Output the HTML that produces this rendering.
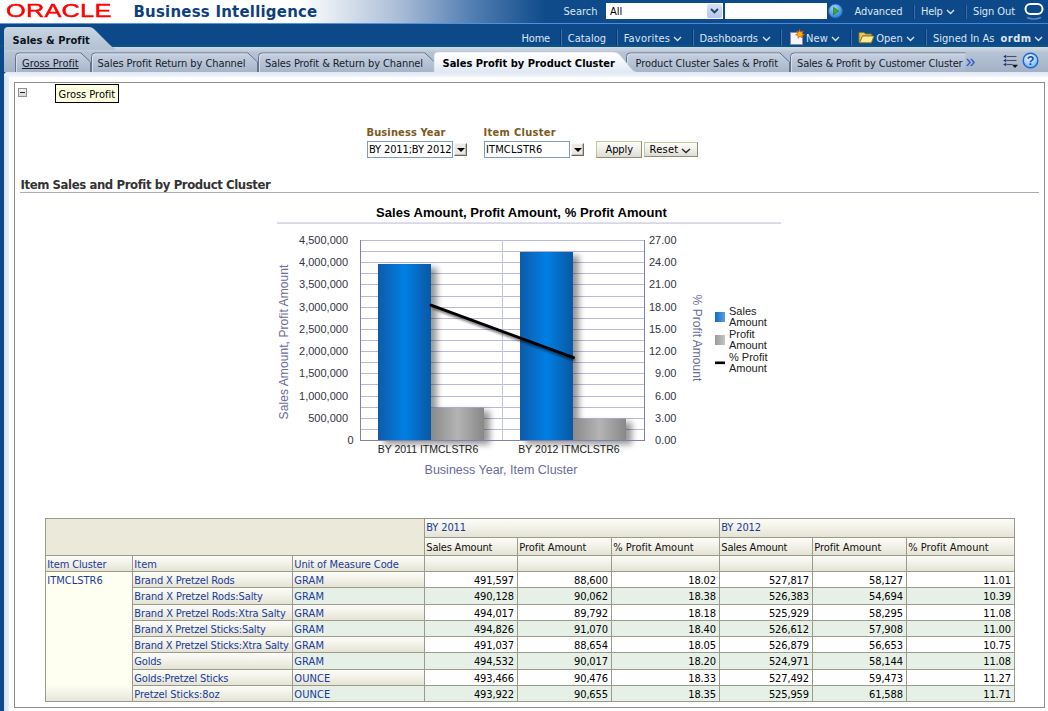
<!DOCTYPE html>
<html>
<head>
<meta charset="utf-8">
<title>Oracle Business Intelligence</title>
<style>
html,body{margin:0;padding:0;}
body{width:1048px;height:711px;overflow:hidden;position:relative;background:#0d4988;
 font-family:"DejaVu Sans Condensed","Liberation Sans",sans-serif;font-size:11px;color:#000;}
.abs{position:absolute;}
.t{position:absolute;white-space:nowrap;line-height:14px;}
/* top header */
#hdr{left:0;top:0;width:1048px;height:23px;background:linear-gradient(90deg,#ffffff 0px,#ffffff 300px,#a9bcd6 400px,#5580b3 470px,#0f4b8b 545px,#0d4988 1048px);}
#hline{left:0;top:23px;width:1048px;height:1px;background:linear-gradient(90deg,#5a9ae6,#3f86de);}
#bar2{left:0;top:24px;width:1048px;height:23px;background:linear-gradient(180deg,#0d4988 0px,#0d4988 20px,#0b5383 21.5px,#0b5383 23px);}
#oracle{left:5.5px;top:-0.6px;font-family:"Liberation Sans",sans-serif;font-size:19px;line-height:24px;color:#ff0000;transform-origin:0 0;transform:scaleX(1.33);letter-spacing:0.2px;-webkit-text-stroke:0.45px #ff0000;}
#bi{left:133.5px;top:0.4px;font-size:16.6px;line-height:23px;font-weight:bold;color:#0f3f7d;letter-spacing:0px;}
.nav{color:#dbe6f5;font-size:11px;}
.sep{position:absolute;width:1px;background:#083a70;box-shadow:1px 0 0 #3a6fae;}
/* tab strip */
#strip{left:4px;top:47px;width:1044px;height:25px;background:linear-gradient(180deg,#d0dae6 0px,#c3ceda 3.5px,#b7c4d5 5px,#aebcd0 14px,#a3b1c7 25px);}
#panel{left:4px;top:72px;width:1044px;height:639px;background:#fff;border-top-left-radius:4px;}
#panelTop{left:4px;top:72px;width:1044px;height:5px;background:linear-gradient(180deg,#dfe8f3,#f3f6fb);border-top-left-radius:4px;}
#panelLeft{left:4px;top:76px;width:5px;height:635px;background:linear-gradient(90deg,#d5e1f0,#e6edf6);}
#box{left:14px;top:82px;width:1029px;height:624px;border:1px solid #8e8e86;background:#fff;}
.tab{position:absolute;top:53px;height:19px;}
.tabtxt{position:absolute;white-space:nowrap;top:57px;line-height:14px;color:#1a1a2a;font-size:11px;}

.ddb{width:11px;height:11px;background:#ebe9e2;border:1px solid;border-color:#f8f8f4 #6a6860 #6a6860 #f8f8f4;box-shadow:inset -1px -1px 0 #c4c2b8;}
.ddb:after{content:"";position:absolute;left:1.5px;top:3.5px;border:4px solid transparent;border-top:4px solid #000;border-bottom:0;}
.btn{border:1px solid;border-color:#c5c7a0 #8e9070 #8e9070 #c5c7a0;background:linear-gradient(180deg,#fbfbf8,#ecece6 60%,#dcdcd2);}
</style>
</head>
<body>
<!-- header -->
<div class="abs" id="hdr"></div>
<div class="abs" id="hline"></div>
<div class="abs" id="bar2"></div>
<div class="t" id="oracle">ORACLE</div>
<div class="t" id="bi" style="letter-spacing:0.240px;">Business Intelligence</div>


<!-- search row -->
<div class="t nav" style="left:563.5px;top:4.7px;letter-spacing:0.003px;">Search</div>
<div class="abs" style="left:606px;top:2.5px;width:117px;height:16px;background:#fff;"></div>
<div class="t" style="left:610px;top:4.7px;color:#000;">All</div>
<div class="abs" style="left:707px;top:3.5px;width:15px;height:14px;background:linear-gradient(180deg,#d6e2f6,#b3c7ea);border-radius:2px;"></div>
<svg class="abs" style="left:707px;top:3.5px" width="15" height="14" viewBox="0 0 15 14"><path d="M4 5 L7.5 8.5 L11 5" fill="none" stroke="#2a3f66" stroke-width="1.8"/></svg>
<div class="abs" style="left:725px;top:2.5px;width:102px;height:16px;background:#fff;"></div>
<svg class="abs" style="left:828px;top:3px" width="15" height="16" viewBox="0 0 15 16">
 <defs><radialGradient id="gb" cx="40%" cy="30%" r="70%"><stop offset="0" stop-color="#a8d4ff"/><stop offset="1" stop-color="#2a7fd6"/></radialGradient></defs>
 <circle cx="7.5" cy="8" r="7" fill="url(#gb)" stroke="#1d62b0" stroke-width="0.8"/>
 <path d="M5.5 4.2 L10.6 8 L5.5 11.8 Z" fill="#35b025" stroke="#1c6e12" stroke-width="0.6"/>
</svg>
<div class="t nav" style="left:854.5px;top:4.7px;letter-spacing:-0.109px;">Advanced</div>
<div class="sep" style="left:913px;top:5px;height:14px;"></div>
<div class="t nav" style="left:921px;top:4.7px;letter-spacing:-0.270px;">Help</div>
<svg class="abs" style="left:946px;top:9px" width="9" height="6" viewBox="0 0 9 6"><path d="M1 1 L4.5 4.5 L8 1" fill="none" stroke="#dbe6f5" stroke-width="1.3"/></svg>
<div class="sep" style="left:965px;top:5px;height:14px;"></div>
<div class="t nav" style="left:973px;top:4.7px;letter-spacing:-0.086px;">Sign Out</div>
<svg class="abs" style="left:1023px;top:2px" width="22" height="20" viewBox="0 0 22 20">
 <rect x="2.5" y="2" width="17" height="10" rx="5" ry="5" fill="none" stroke="#ffffff" stroke-width="2"/>
 <path d="M4 15.5 Q11 18.5 18 15.5" fill="none" stroke="#5f86b8" stroke-width="1.6"/>
</svg>
<!-- nav row -->
<div class="t nav" style="left:521.5px;top:31.5px;letter-spacing:-0.184px;">Home</div>
<div class="sep" style="left:560px;top:29px;height:17px;"></div>
<div class="t nav" style="left:567.7px;top:31.5px;letter-spacing:0.069px;">Catalog</div>
<div class="sep" style="left:616px;top:29px;height:17px;"></div>
<div class="t nav" style="left:623.7px;top:31.5px;letter-spacing:0.210px;">Favorites</div>
<svg class="abs" style="left:673px;top:36px" width="9" height="6" viewBox="0 0 9 6"><path d="M1 1 L4.5 4.5 L8 1" fill="none" stroke="#dbe6f5" stroke-width="1.3"/></svg>
<div class="sep" style="left:692px;top:29px;height:17px;"></div>
<div class="t nav" style="left:699.5px;top:31.5px;letter-spacing:-0.034px;">Dashboards</div>
<svg class="abs" style="left:761.5px;top:36px" width="9" height="6" viewBox="0 0 9 6"><path d="M1 1 L4.5 4.5 L8 1" fill="none" stroke="#dbe6f5" stroke-width="1.3"/></svg>
<div class="sep" style="left:780px;top:29px;height:17px;"></div>
<svg class="abs" style="left:789px;top:29px" width="16" height="17" viewBox="0 0 16 17">
 <path d="M1.5 3.5 H10 L13.5 7 V15.5 H1.5 Z" fill="#f4f4fa" stroke="#8a8aa8" stroke-width="1"/>
 <path d="M10.5 0.5 L11.6 3 L14.3 2.2 L13 4.5 L15.5 5.8 L12.8 6.4 L13.2 9 L11 7.4 L9 9.2 L9.2 6.5 L6.6 5.8 L9 4.6 L7.8 2.2 L10 3 Z" fill="#ffb400" stroke="#d05a00" stroke-width="0.7"/>
</svg>
<div class="t nav" style="left:806px;top:31.5px;letter-spacing:0.135px;">New</div>
<svg class="abs" style="left:831px;top:36px" width="9" height="6" viewBox="0 0 9 6"><path d="M1 1 L4.5 4.5 L8 1" fill="none" stroke="#dbe6f5" stroke-width="1.3"/></svg>
<div class="sep" style="left:850px;top:29px;height:17px;"></div>
<svg class="abs" style="left:858px;top:30px" width="17" height="15" viewBox="0 0 17 15">
 <path d="M1 2.5 H6 L7.5 4 H13.5 V6 H4.5 L1.8 12.5 H1 Z" fill="#e8c860" stroke="#8c7420" stroke-width="0.9"/>
 <path d="M4.5 6 H16 L13.3 12.8 H1.6 Z" fill="#f8e89a" stroke="#8c7420" stroke-width="0.9"/>
</svg>
<div class="t nav" style="left:876.2px;top:31.5px;letter-spacing:0.016px;">Open</div>
<svg class="abs" style="left:906px;top:36px" width="9" height="6" viewBox="0 0 9 6"><path d="M1 1 L4.5 4.5 L8 1" fill="none" stroke="#dbe6f5" stroke-width="1.3"/></svg>
<div class="sep" style="left:925px;top:29px;height:17px;"></div>
<div class="t nav" style="left:933px;top:31.5px;letter-spacing:0.010px;">Signed In As</div>
<div class="t nav" style="left:1000.5px;top:31.5px;letter-spacing:0.477px;font-weight:bold;">ordm</div>
<svg class="abs" style="left:1034px;top:36px" width="9" height="6" viewBox="0 0 9 6"><path d="M1 1 L4.5 4.5 L8 1" fill="none" stroke="#dbe6f5" stroke-width="1.3"/></svg>

<!-- content panel -->
<div class="abs" id="strip"></div>
<svg class="abs" style="left:0;top:24px" width="130" height="26" viewBox="0 24 130 26">
 <defs><linearGradient id="sg" x1="0" y1="0" x2="0" y2="1"><stop offset="0" stop-color="#cad6e2"/><stop offset="0.5" stop-color="#bccad9"/><stop offset="1" stop-color="#b4c1d3"/></linearGradient></defs>
 <path d="M4 50 V31 Q4 27 8 27 H89 Q92 27 94 29 L110 45 Q112 47 114 47.5 L116 50 Z" fill="url(#sg)"/>
</svg>
<div class="t" style="left:12.5px;top:33.5px;letter-spacing:0.048px;font-weight:bold;color:#0b1220;">Sales &amp; Profit</div>

<svg class="abs" style="left:0;top:47px" width="1048" height="25" viewBox="0 47 1048 25">
<defs><linearGradient id="tg" x1="0" y1="0" x2="0" y2="1"><stop offset="0" stop-color="#c7d2e1"/><stop offset="1" stop-color="#a5b4ca"/></linearGradient><linearGradient id="tsel" x1="0" y1="0" x2="0" y2="1"><stop offset="0" stop-color="#ffffff"/><stop offset="0.45" stop-color="#f4f7fb"/><stop offset="1" stop-color="#dfe8f3"/></linearGradient><clipPath id="clip6"><rect x="780" y="47" width="185.5" height="25"/></clipPath></defs>
<path d="M15.5 72.5 V56.5 Q15.5 53 19 53 H81 L90.5 62 V72.5" fill="url(#tg)" stroke="#64748c" stroke-width="1"/>
<path d="M16.5 72.5 V57 Q16.5 54 19.5 54 H80.5" fill="none" stroke="#dbe3ee" stroke-opacity="0.85" stroke-width="1"/>
<path d="M91.5 72.5 V56.5 Q91.5 53 95 53 H248 L257.5 62 V72.5" fill="url(#tg)" stroke="#64748c" stroke-width="1"/>
<path d="M92.5 72.5 V57 Q92.5 54 95.5 54 H247.5" fill="none" stroke="#dbe3ee" stroke-opacity="0.85" stroke-width="1"/>
<path d="M258.5 72.5 V56.5 Q258.5 53 262 53 H425 L434.5 62 V72.5" fill="url(#tg)" stroke="#64748c" stroke-width="1"/>
<path d="M259.5 72.5 V57 Q259.5 54 262.5 54 H424.5" fill="none" stroke="#dbe3ee" stroke-opacity="0.85" stroke-width="1"/>
<path d="M626.5 72.5 V56.5 Q626.5 53 630 53 H780 L789.5 62 V72.5" fill="url(#tg)" stroke="#64748c" stroke-width="1"/>
<path d="M627.5 72.5 V57 Q627.5 54 630.5 54 H779.5" fill="none" stroke="#dbe3ee" stroke-opacity="0.85" stroke-width="1"/>
<path d="M790.5 72.5 V56.5 Q790.5 53 794 53 H966 L975.5 62 V72.5" fill="url(#tg)" stroke="#64748c" stroke-width="1" clip-path="url(#clip6)"/>
<path d="M791.5 72.5 V57 Q791.5 54 794.5 54 H965.5" fill="none" stroke="#dbe3ee" stroke-opacity="0.85" stroke-width="1" clip-path="url(#clip6)"/>
<path d="M434 72.5 V56 Q434 52 438.5 52 H613 Q617.5 52 620 55 L631 68.5 Q633.5 71.5 637 72.5 Z" fill="url(#tsel)" stroke="#c2cede" stroke-width="0.6"/>
</svg>
<div class="tabtxt" style="left:22px;letter-spacing:-0.023px;text-decoration:underline;">Gross Profit</div>
<div class="tabtxt" style="left:97.5px;letter-spacing:-0.074px;">Sales Profit Return by Channel</div>
<div class="tabtxt" style="left:265px;letter-spacing:-0.097px;">Sales Profit &amp; Return by Channel</div>
<div class="tabtxt" style="left:635.5px;letter-spacing:-0.085px;">Product Cluster Sales &amp; Profit</div>
<div class="tabtxt" style="left:797px;letter-spacing:-0.159px;">Sales &amp; Profit by Customer Cluster</div>
<div class="tabtxt" style="left:442.5px;letter-spacing:0.010px;font-weight:bold;color:#000;">Sales Profit by Product Cluster</div>
<div class="t" style="left:965.5px;top:51.3px;font-size:17.5px;line-height:20px;color:#2b5ac4;font-family:'Liberation Sans',sans-serif;">»</div>
<svg class="abs" style="left:1002px;top:54px" width="17" height="15" viewBox="0 0 17 15">
 <g stroke="#4a4f5e" stroke-width="1.1"><path d="M4.5 2.5 H14.5"/><path d="M4.5 6.5 H14.5"/><path d="M4.5 10.5 H10.5"/></g>
 <g fill="#2c2c7a"><path d="M1.2 2.5 L4.2 0.8 V4.2 Z"/><path d="M1.2 6.5 L4.2 4.8 V8.2 Z"/><path d="M1.2 10.5 L4.2 8.8 V12.2 Z"/></g>
 <path d="M10 10.8 H16 L13 14 Z" fill="#111"/>
</svg>
<svg class="abs" style="left:1022px;top:52px" width="17" height="17" viewBox="0 0 17 17">
 <defs><radialGradient id="hb" cx="45%" cy="30%" r="75%"><stop offset="0" stop-color="#e6f3ff"/><stop offset="0.55" stop-color="#a9d0fa"/><stop offset="1" stop-color="#6ea9ee"/></radialGradient></defs>
 <circle cx="8.5" cy="8.5" r="7.3" fill="url(#hb)" stroke="#1e66c8" stroke-width="1.4"/>
 <text x="8.5" y="12.9" text-anchor="middle" font-family="Liberation Sans, sans-serif" font-weight="bold" font-size="12.5" fill="#0d4db8">?</text>
</svg>
<div class="abs" id="panel"></div>
<div class="abs" id="panelTop"></div>
<div class="abs" id="panelLeft"></div>
<div class="abs" id="box"></div>

<!-- collapse icon + tooltip -->
<div class="abs" style="left:18px;top:88px;width:7px;height:7px;border:1px solid #8f8f8f;background:linear-gradient(180deg,#f4f4f4,#d8d8d8);"></div>
<div class="abs" style="left:20px;top:92px;width:5px;height:1px;background:#222;"></div>
<div class="abs" style="left:55px;top:84px;width:62px;height:17px;border:1px solid #000;background:#ffffe1;"></div>
<div class="t" style="left:58.5px;top:87.8px;letter-spacing:-0.023px;color:#000;">Gross Profit</div>

<!-- prompts -->
<div class="t" style="left:366.5px;top:125.8px;letter-spacing:0.131px;font-weight:bold;color:#7b5a1f;">Business Year</div>
<div class="t" style="left:483.5px;top:125.8px;letter-spacing:0.307px;font-weight:bold;color:#7b5a1f;">Item Cluster</div>
<div class="abs" style="left:367px;top:141px;width:84px;height:15px;border:1px solid #7f9db9;background:#fff;"></div>
<div class="t" style="left:369px;top:143.2px;letter-spacing:-0.130px;color:#000;">BY 2011;BY 2012</div>
<div class="abs ddb" style="left:454px;top:143px;"></div>
<div class="abs" style="left:484px;top:141px;width:84px;height:15px;border:1px solid #7f9db9;background:#fff;"></div>
<div class="t" style="left:486px;top:143.2px;letter-spacing:0.120px;color:#000;">ITMCLSTR6</div>
<div class="abs ddb" style="left:571px;top:143px;"></div>
<div class="abs btn" style="left:596px;top:141px;width:44px;height:15px;"></div>
<div class="t" style="left:605.5px;top:143.2px;letter-spacing:-0.091px;color:#000;">Apply</div>
<div class="abs btn" style="left:644px;top:142px;width:52px;height:13px;"></div>
<div class="t" style="left:649.5px;top:143.2px;letter-spacing:0.278px;color:#000;">Reset</div>
<svg class="abs" style="left:680.5px;top:147.5px" width="10" height="6" viewBox="0 0 10 6"><path d="M1 1 L5 4.6 L9 1" fill="none" stroke="#222" stroke-width="1.3"/></svg>

<!-- section title -->
<div class="t" style="left:20.5px;top:175.5px;letter-spacing:-0.405px;font-size:13px;line-height:17px;font-weight:bold;color:#333333;">Item Sales and Profit by Product Cluster</div>
<div class="abs" style="left:20px;top:192px;width:1019px;height:1px;background:#a9adb8;"></div>
<!-- chart -->
<svg class="abs" style="left:270px;top:198px" width="520" height="295" viewBox="270 198 520 295" font-family="Liberation Sans, sans-serif">
<defs>
<linearGradient id="gBlue" x1="0" y1="0" x2="1" y2="0"><stop offset="0" stop-color="#0e5ba8"/><stop offset="0.5" stop-color="#007fe4"/><stop offset="1" stop-color="#0a58a4"/></linearGradient>
<linearGradient id="gGray" x1="0" y1="0" x2="1" y2="0"><stop offset="0" stop-color="#8a8a8a"/><stop offset="0.5" stop-color="#b4b4b4"/><stop offset="1" stop-color="#888888"/></linearGradient>
<linearGradient id="lBlue" x1="0" y1="0" x2="1" y2="0"><stop offset="0" stop-color="#0a6dcc"/><stop offset="1" stop-color="#5f9fe0"/></linearGradient>
<linearGradient id="lGray" x1="0" y1="0" x2="1" y2="0"><stop offset="0" stop-color="#9b9b9b"/><stop offset="1" stop-color="#c4c4c4"/></linearGradient>
<filter id="sh" x="-20%" y="-10%" width="150%" height="130%"><feGaussianBlur stdDeviation="3.3"/></filter>
<filter id="shl" x="-10%" y="-30%" width="120%" height="160%"><feGaussianBlur stdDeviation="1.2"/></filter>
</defs>
<text x="521.5" y="217" text-anchor="middle" font-size="13" font-weight="bold" fill="#000000" letter-spacing="0.06">Sales Amount, Profit Amount, % Profit Amount</text>
<rect x="277" y="222.3" width="504" height="1.6" fill="#d3d3e6"/>
<line x1="360.5" y1="240.5" x2="644.5" y2="240.5" stroke="#b8b8d8" stroke-width="1"/>
<line x1="360.5" y1="251.5" x2="644.5" y2="251.5" stroke="#b8b8d8" stroke-width="1"/>
<line x1="360.5" y1="262.5" x2="644.5" y2="262.5" stroke="#b8b8d8" stroke-width="1"/>
<line x1="360.5" y1="273.5" x2="644.5" y2="273.5" stroke="#b8b8d8" stroke-width="1"/>
<line x1="360.5" y1="284.5" x2="644.5" y2="284.5" stroke="#b8b8d8" stroke-width="1"/>
<line x1="360.5" y1="296.5" x2="644.5" y2="296.5" stroke="#b8b8d8" stroke-width="1"/>
<line x1="360.5" y1="307.5" x2="644.5" y2="307.5" stroke="#b8b8d8" stroke-width="1"/>
<line x1="360.5" y1="318.5" x2="644.5" y2="318.5" stroke="#b8b8d8" stroke-width="1"/>
<line x1="360.5" y1="329.5" x2="644.5" y2="329.5" stroke="#b8b8d8" stroke-width="1"/>
<line x1="360.5" y1="340.5" x2="644.5" y2="340.5" stroke="#b8b8d8" stroke-width="1"/>
<line x1="360.5" y1="351.5" x2="644.5" y2="351.5" stroke="#b8b8d8" stroke-width="1"/>
<line x1="360.5" y1="362.5" x2="644.5" y2="362.5" stroke="#b8b8d8" stroke-width="1"/>
<line x1="360.5" y1="373.5" x2="644.5" y2="373.5" stroke="#b8b8d8" stroke-width="1"/>
<line x1="360.5" y1="384.5" x2="644.5" y2="384.5" stroke="#b8b8d8" stroke-width="1"/>
<line x1="360.5" y1="396.5" x2="644.5" y2="396.5" stroke="#b8b8d8" stroke-width="1"/>
<line x1="360.5" y1="407.5" x2="644.5" y2="407.5" stroke="#b8b8d8" stroke-width="1"/>
<line x1="360.5" y1="418.5" x2="644.5" y2="418.5" stroke="#b8b8d8" stroke-width="1"/>
<line x1="360.5" y1="429.5" x2="644.5" y2="429.5" stroke="#b8b8d8" stroke-width="1"/>
<line x1="360.5" y1="440.5" x2="644.5" y2="440.5" stroke="#b8b8d8" stroke-width="1"/>
<line x1="502.5" y1="240.5" x2="502.5" y2="440.5" stroke="#c4c4de" stroke-width="1"/>
<g filter="url(#sh)" opacity="0.4"><rect x="384" y="267.5" width="53" height="177.00" fill="#000"/><rect x="437" y="411.1" width="53" height="33.40" fill="#000"/><rect x="526" y="255.5" width="53" height="189.00" fill="#000"/><rect x="579" y="422.2" width="53" height="22.30" fill="#000"/></g>
<line x1="360.5" y1="240" x2="360.5" y2="441" stroke="#8080b0" stroke-width="1"/>
<line x1="644.5" y1="240" x2="644.5" y2="441" stroke="#8080b0" stroke-width="1"/>
<line x1="360.0" y1="440.5" x2="645.0" y2="440.5" stroke="#8080b0" stroke-width="1"/>
<rect x="378" y="264" width="53" height="176.00" fill="url(#gBlue)"/>
<rect x="431" y="407.6" width="53" height="32.40" fill="url(#gGray)"/>
<rect x="520" y="252" width="53" height="188.00" fill="url(#gBlue)"/>
<rect x="573" y="418.7" width="53" height="21.30" fill="url(#gGray)"/>
<line x1="432.5" y1="307.7" x2="575.0" y2="360.1" stroke="#000" stroke-opacity="0.5" stroke-width="3" filter="url(#shl)"/>
<line x1="431.0" y1="305.2" x2="573.5" y2="357.6" stroke="#000" stroke-width="3" stroke-linecap="round"/>
<text x="353.5" y="444.30" text-anchor="end" font-size="11" fill="#333344">0</text>
<text x="348" y="422.30" text-anchor="end" font-size="11" fill="#333344">500,000</text>
<text x="348" y="400.30" text-anchor="end" font-size="11" fill="#333344">1,000,000</text>
<text x="348" y="377.30" text-anchor="end" font-size="11" fill="#333344">1,500,000</text>
<text x="348" y="355.30" text-anchor="end" font-size="11" fill="#333344">2,000,000</text>
<text x="348" y="333.30" text-anchor="end" font-size="11" fill="#333344">2,500,000</text>
<text x="348" y="311.30" text-anchor="end" font-size="11" fill="#333344">3,000,000</text>
<text x="348" y="288.30" text-anchor="end" font-size="11" fill="#333344">3,500,000</text>
<text x="348" y="266.30" text-anchor="end" font-size="11" fill="#333344">4,000,000</text>
<text x="348" y="244.30" text-anchor="end" font-size="11" fill="#333344">4,500,000</text>
<text x="676.5" y="444.30" text-anchor="end" font-size="11" fill="#333344">0.00</text>
<text x="676.5" y="422.30" text-anchor="end" font-size="11" fill="#333344">3.00</text>
<text x="676.5" y="400.30" text-anchor="end" font-size="11" fill="#333344">6.00</text>
<text x="676.5" y="377.30" text-anchor="end" font-size="11" fill="#333344">9.00</text>
<text x="676.5" y="355.30" text-anchor="end" font-size="11" fill="#333344">12.00</text>
<text x="676.5" y="333.30" text-anchor="end" font-size="11" fill="#333344">15.00</text>
<text x="676.5" y="311.30" text-anchor="end" font-size="11" fill="#333344">18.00</text>
<text x="676.5" y="288.30" text-anchor="end" font-size="11" fill="#333344">21.00</text>
<text x="676.5" y="266.30" text-anchor="end" font-size="11" fill="#333344">24.00</text>
<text x="676.5" y="244.30" text-anchor="end" font-size="11" fill="#333344">27.00</text>
<text transform="translate(288,342) rotate(-90)" text-anchor="middle" font-size="12" fill="#6a6a9c" letter-spacing="0.08">Sales Amount, Profit Amount</text>
<text transform="translate(692.5,338) rotate(90)" text-anchor="middle" font-size="12" fill="#6a6a9c" letter-spacing="0.06">% Profit Amount</text>
<text x="501" y="474" text-anchor="middle" font-size="12.5" fill="#6a6a9c">Business Year, Item Cluster</text>
<text x="428" y="453" text-anchor="middle" font-size="10.5" fill="#222222">BY 2011 ITMCLSTR6</text>
<text x="569" y="453" text-anchor="middle" font-size="10.5" fill="#222222">BY 2012 ITMCLSTR6</text>
<rect x="715" y="312" width="10" height="10" fill="url(#lBlue)"/>
<rect x="715" y="335" width="10" height="10" fill="url(#lGray)"/>
<rect x="715" y="361.5" width="10" height="2.6" fill="#000"/>
<text x="729" y="314.6" font-size="11" fill="#222222">Sales</text>
<text x="729" y="325.6" font-size="11" fill="#222222">Amount</text>
<text x="729" y="337.7" font-size="11" fill="#222222">Profit</text>
<text x="729" y="348.5" font-size="11" fill="#222222">Amount</text>
<text x="729" y="360.6" font-size="11" fill="#222222">% Profit</text>
<text x="729" y="371.5" font-size="11" fill="#222222">Amount</text>
</svg>
<!-- table -->
<div class="abs" style="left:45px;top:518px;width:970px;height:184px;background:#9b9b8d;"></div>
<div class="abs" style="left:46px;top:519px;width:378px;height:36px;background:#ebe9d9;"></div>
<div class="abs" style="left:425px;top:519px;width:294px;height:18px;background:linear-gradient(180deg,#fcfcf8 0%,#f3f2ea 45%,#e5e3d4 100%);"></div>
<div class="t" style="left:426.3px;top:520.5px;letter-spacing:-0.137px;color:#183a9a;">BY 2011</div>
<div class="abs" style="left:720px;top:519px;width:294px;height:18px;background:linear-gradient(180deg,#fcfcf8 0%,#f3f2ea 45%,#e5e3d4 100%);"></div>
<div class="t" style="left:721.3px;top:520.5px;letter-spacing:-0.137px;color:#183a9a;">BY 2012</div>
<div class="abs" style="left:425px;top:538px;width:92px;height:17px;background:linear-gradient(180deg,#fcfcf8 0%,#f3f2ea 45%,#e5e3d4 100%);"></div>
<div class="t" style="left:426.3px;top:540.5px;letter-spacing:-0.198px;color:#111111;">Sales Amount</div>
<div class="abs" style="left:425px;top:556px;width:92px;height:15px;background:linear-gradient(180deg,#fcfcf8 0%,#f3f2ea 45%,#e5e3d4 100%);"></div>
<div class="abs" style="left:518px;top:538px;width:93px;height:17px;background:linear-gradient(180deg,#fcfcf8 0%,#f3f2ea 45%,#e5e3d4 100%);"></div>
<div class="t" style="left:519.3px;top:540.5px;letter-spacing:-0.061px;color:#111111;">Profit Amount</div>
<div class="abs" style="left:518px;top:556px;width:93px;height:15px;background:linear-gradient(180deg,#fcfcf8 0%,#f3f2ea 45%,#e5e3d4 100%);"></div>
<div class="abs" style="left:612px;top:538px;width:107px;height:17px;background:linear-gradient(180deg,#fcfcf8 0%,#f3f2ea 45%,#e5e3d4 100%);"></div>
<div class="t" style="left:613.3px;top:540.5px;letter-spacing:-0.006px;color:#111111;">% Profit Amount</div>
<div class="abs" style="left:612px;top:556px;width:107px;height:15px;background:linear-gradient(180deg,#fcfcf8 0%,#f3f2ea 45%,#e5e3d4 100%);"></div>
<div class="abs" style="left:720px;top:538px;width:92px;height:17px;background:linear-gradient(180deg,#fcfcf8 0%,#f3f2ea 45%,#e5e3d4 100%);"></div>
<div class="t" style="left:721.3px;top:540.5px;letter-spacing:-0.198px;color:#111111;">Sales Amount</div>
<div class="abs" style="left:720px;top:556px;width:92px;height:15px;background:linear-gradient(180deg,#fcfcf8 0%,#f3f2ea 45%,#e5e3d4 100%);"></div>
<div class="abs" style="left:813px;top:538px;width:93px;height:17px;background:linear-gradient(180deg,#fcfcf8 0%,#f3f2ea 45%,#e5e3d4 100%);"></div>
<div class="t" style="left:814.3px;top:540.5px;letter-spacing:-0.061px;color:#111111;">Profit Amount</div>
<div class="abs" style="left:813px;top:556px;width:93px;height:15px;background:linear-gradient(180deg,#fcfcf8 0%,#f3f2ea 45%,#e5e3d4 100%);"></div>
<div class="abs" style="left:907px;top:538px;width:107px;height:17px;background:linear-gradient(180deg,#fcfcf8 0%,#f3f2ea 45%,#e5e3d4 100%);"></div>
<div class="t" style="left:908.3px;top:540.5px;letter-spacing:-0.006px;color:#111111;">% Profit Amount</div>
<div class="abs" style="left:907px;top:556px;width:107px;height:15px;background:linear-gradient(180deg,#fcfcf8 0%,#f3f2ea 45%,#e5e3d4 100%);"></div>
<div class="abs" style="left:46px;top:556px;width:86px;height:15px;background:linear-gradient(180deg,#fcfcf8 0%,#f3f2ea 45%,#e5e3d4 100%);"></div>
<div class="t" style="left:47.3px;top:557.5px;letter-spacing:-0.150px;color:#183a9a;">Item Cluster</div>
<div class="abs" style="left:133px;top:556px;width:159px;height:15px;background:linear-gradient(180deg,#fcfcf8 0%,#f3f2ea 45%,#e5e3d4 100%);"></div>
<div class="t" style="left:134.3px;top:557.5px;letter-spacing:0.055px;color:#183a9a;">Item</div>
<div class="abs" style="left:293px;top:556px;width:131px;height:15px;background:linear-gradient(180deg,#fcfcf8 0%,#f3f2ea 45%,#e5e3d4 100%);"></div>
<div class="t" style="left:294.3px;top:557.5px;letter-spacing:-0.100px;color:#183a9a;">Unit of Measure Code</div>
<div class="abs" style="left:46px;top:572px;width:86px;height:129px;background:linear-gradient(180deg,#fffff1 0px,#fffff1 112px,#f5f4e9 120px,#e8e6d8 129px);"></div>
<div class="t" style="left:47.3px;top:573.5px;letter-spacing:0.009px;color:#183a9a;">ITMCLSTR6</div>
<div class="abs" style="left:133px;top:572px;width:159px;height:15px;background:linear-gradient(180deg,#fcfcf8 0%,#f3f2ea 45%,#e5e3d4 100%);"></div>
<div class="t" style="left:134.3px;top:573.5px;letter-spacing:-0.146px;color:#183a9a;">Brand X Pretzel Rods</div>
<div class="abs" style="left:293px;top:572px;width:131px;height:15px;background:linear-gradient(180deg,#fcfcf8 0%,#f3f2ea 45%,#e5e3d4 100%);"></div>
<div class="t" style="left:294.3px;top:573.5px;letter-spacing:0.082px;color:#183a9a;">GRAM</div>
<div class="abs" style="left:425px;top:572px;width:92px;height:15px;background:#ffffff;"></div>
<div class="t" style="left:433.79999999999995px;width:80px;text-align:right;top:573.5px;letter-spacing:-0.158px;color:#000000;">491,597</div>
<div class="abs" style="left:518px;top:572px;width:93px;height:15px;background:#ffffff;"></div>
<div class="t" style="left:527.8px;width:80px;text-align:right;top:573.5px;letter-spacing:-0.156px;color:#000000;">88,600</div>
<div class="abs" style="left:612px;top:572px;width:107px;height:15px;background:#ffffff;"></div>
<div class="t" style="left:635.8px;width:80px;text-align:right;top:573.5px;letter-spacing:-0.153px;color:#000000;">18.02</div>
<div class="abs" style="left:720px;top:572px;width:92px;height:15px;background:#ffffff;"></div>
<div class="t" style="left:728.8px;width:80px;text-align:right;top:573.5px;letter-spacing:-0.158px;color:#000000;">527,817</div>
<div class="abs" style="left:813px;top:572px;width:93px;height:15px;background:#ffffff;"></div>
<div class="t" style="left:822.8px;width:80px;text-align:right;top:573.5px;letter-spacing:-0.156px;color:#000000;">58,127</div>
<div class="abs" style="left:907px;top:572px;width:107px;height:15px;background:#ffffff;"></div>
<div class="t" style="left:930.8px;width:80px;text-align:right;top:573.5px;letter-spacing:-0.153px;color:#000000;">11.01</div>
<div class="abs" style="left:133px;top:588px;width:159px;height:16px;background:linear-gradient(180deg,#fcfcf8 0%,#f3f2ea 45%,#e5e3d4 100%);"></div>
<div class="t" style="left:134.3px;top:589.5px;letter-spacing:-0.109px;color:#183a9a;">Brand X Pretzel Rods:Salty</div>
<div class="abs" style="left:293px;top:588px;width:131px;height:16px;background:#e6f0e6;"></div>
<div class="t" style="left:294.3px;top:589.5px;letter-spacing:0.082px;color:#183a9a;">GRAM</div>
<div class="abs" style="left:425px;top:588px;width:92px;height:16px;background:#e6f0e6;"></div>
<div class="t" style="left:433.79999999999995px;width:80px;text-align:right;top:589.5px;letter-spacing:-0.158px;color:#000000;">490,128</div>
<div class="abs" style="left:518px;top:588px;width:93px;height:16px;background:#e6f0e6;"></div>
<div class="t" style="left:527.8px;width:80px;text-align:right;top:589.5px;letter-spacing:-0.156px;color:#000000;">90,062</div>
<div class="abs" style="left:612px;top:588px;width:107px;height:16px;background:#e6f0e6;"></div>
<div class="t" style="left:635.8px;width:80px;text-align:right;top:589.5px;letter-spacing:-0.153px;color:#000000;">18.38</div>
<div class="abs" style="left:720px;top:588px;width:92px;height:16px;background:#e6f0e6;"></div>
<div class="t" style="left:728.8px;width:80px;text-align:right;top:589.5px;letter-spacing:-0.158px;color:#000000;">526,383</div>
<div class="abs" style="left:813px;top:588px;width:93px;height:16px;background:#e6f0e6;"></div>
<div class="t" style="left:822.8px;width:80px;text-align:right;top:589.5px;letter-spacing:-0.156px;color:#000000;">54,694</div>
<div class="abs" style="left:907px;top:588px;width:107px;height:16px;background:#e6f0e6;"></div>
<div class="t" style="left:930.8px;width:80px;text-align:right;top:589.5px;letter-spacing:-0.153px;color:#000000;">10.39</div>
<div class="abs" style="left:133px;top:605px;width:159px;height:15px;background:linear-gradient(180deg,#fcfcf8 0%,#f3f2ea 45%,#e5e3d4 100%);"></div>
<div class="t" style="left:134.3px;top:606.5px;letter-spacing:-0.121px;color:#183a9a;">Brand X Pretzel Rods:Xtra Salty</div>
<div class="abs" style="left:293px;top:605px;width:131px;height:15px;background:linear-gradient(180deg,#fcfcf8 0%,#f3f2ea 45%,#e5e3d4 100%);"></div>
<div class="t" style="left:294.3px;top:606.5px;letter-spacing:0.082px;color:#183a9a;">GRAM</div>
<div class="abs" style="left:425px;top:605px;width:92px;height:15px;background:#ffffff;"></div>
<div class="t" style="left:433.79999999999995px;width:80px;text-align:right;top:606.5px;letter-spacing:-0.158px;color:#000000;">494,017</div>
<div class="abs" style="left:518px;top:605px;width:93px;height:15px;background:#ffffff;"></div>
<div class="t" style="left:527.8px;width:80px;text-align:right;top:606.5px;letter-spacing:-0.156px;color:#000000;">89,792</div>
<div class="abs" style="left:612px;top:605px;width:107px;height:15px;background:#ffffff;"></div>
<div class="t" style="left:635.8px;width:80px;text-align:right;top:606.5px;letter-spacing:-0.153px;color:#000000;">18.18</div>
<div class="abs" style="left:720px;top:605px;width:92px;height:15px;background:#ffffff;"></div>
<div class="t" style="left:728.8px;width:80px;text-align:right;top:606.5px;letter-spacing:-0.158px;color:#000000;">525,929</div>
<div class="abs" style="left:813px;top:605px;width:93px;height:15px;background:#ffffff;"></div>
<div class="t" style="left:822.8px;width:80px;text-align:right;top:606.5px;letter-spacing:-0.156px;color:#000000;">58,295</div>
<div class="abs" style="left:907px;top:605px;width:107px;height:15px;background:#ffffff;"></div>
<div class="t" style="left:930.8px;width:80px;text-align:right;top:606.5px;letter-spacing:-0.153px;color:#000000;">11.08</div>
<div class="abs" style="left:133px;top:621px;width:159px;height:15px;background:linear-gradient(180deg,#fcfcf8 0%,#f3f2ea 45%,#e5e3d4 100%);"></div>
<div class="t" style="left:134.3px;top:622.5px;letter-spacing:-0.186px;color:#183a9a;">Brand X Pretzel Sticks:Salty</div>
<div class="abs" style="left:293px;top:621px;width:131px;height:15px;background:#e6f0e6;"></div>
<div class="t" style="left:294.3px;top:622.5px;letter-spacing:0.082px;color:#183a9a;">GRAM</div>
<div class="abs" style="left:425px;top:621px;width:92px;height:15px;background:#e6f0e6;"></div>
<div class="t" style="left:433.79999999999995px;width:80px;text-align:right;top:622.5px;letter-spacing:-0.158px;color:#000000;">494,826</div>
<div class="abs" style="left:518px;top:621px;width:93px;height:15px;background:#e6f0e6;"></div>
<div class="t" style="left:527.8px;width:80px;text-align:right;top:622.5px;letter-spacing:-0.156px;color:#000000;">91,070</div>
<div class="abs" style="left:612px;top:621px;width:107px;height:15px;background:#e6f0e6;"></div>
<div class="t" style="left:635.8px;width:80px;text-align:right;top:622.5px;letter-spacing:-0.153px;color:#000000;">18.40</div>
<div class="abs" style="left:720px;top:621px;width:92px;height:15px;background:#e6f0e6;"></div>
<div class="t" style="left:728.8px;width:80px;text-align:right;top:622.5px;letter-spacing:-0.158px;color:#000000;">526,612</div>
<div class="abs" style="left:813px;top:621px;width:93px;height:15px;background:#e6f0e6;"></div>
<div class="t" style="left:822.8px;width:80px;text-align:right;top:622.5px;letter-spacing:-0.156px;color:#000000;">57,908</div>
<div class="abs" style="left:907px;top:621px;width:107px;height:15px;background:#e6f0e6;"></div>
<div class="t" style="left:930.8px;width:80px;text-align:right;top:622.5px;letter-spacing:-0.153px;color:#000000;">11.00</div>
<div class="abs" style="left:133px;top:637px;width:159px;height:15px;background:linear-gradient(180deg,#fcfcf8 0%,#f3f2ea 45%,#e5e3d4 100%);"></div>
<div class="t" style="left:134.3px;top:638.5px;letter-spacing:-0.186px;color:#183a9a;">Brand X Pretzel Sticks:Xtra Salty</div>
<div class="abs" style="left:293px;top:637px;width:131px;height:15px;background:linear-gradient(180deg,#fcfcf8 0%,#f3f2ea 45%,#e5e3d4 100%);"></div>
<div class="t" style="left:294.3px;top:638.5px;letter-spacing:0.082px;color:#183a9a;">GRAM</div>
<div class="abs" style="left:425px;top:637px;width:92px;height:15px;background:#ffffff;"></div>
<div class="t" style="left:433.79999999999995px;width:80px;text-align:right;top:638.5px;letter-spacing:-0.158px;color:#000000;">491,037</div>
<div class="abs" style="left:518px;top:637px;width:93px;height:15px;background:#ffffff;"></div>
<div class="t" style="left:527.8px;width:80px;text-align:right;top:638.5px;letter-spacing:-0.156px;color:#000000;">88,654</div>
<div class="abs" style="left:612px;top:637px;width:107px;height:15px;background:#ffffff;"></div>
<div class="t" style="left:635.8px;width:80px;text-align:right;top:638.5px;letter-spacing:-0.153px;color:#000000;">18.05</div>
<div class="abs" style="left:720px;top:637px;width:92px;height:15px;background:#ffffff;"></div>
<div class="t" style="left:728.8px;width:80px;text-align:right;top:638.5px;letter-spacing:-0.158px;color:#000000;">526,879</div>
<div class="abs" style="left:813px;top:637px;width:93px;height:15px;background:#ffffff;"></div>
<div class="t" style="left:822.8px;width:80px;text-align:right;top:638.5px;letter-spacing:-0.156px;color:#000000;">56,653</div>
<div class="abs" style="left:907px;top:637px;width:107px;height:15px;background:#ffffff;"></div>
<div class="t" style="left:930.8px;width:80px;text-align:right;top:638.5px;letter-spacing:-0.153px;color:#000000;">10.75</div>
<div class="abs" style="left:133px;top:653px;width:159px;height:16px;background:linear-gradient(180deg,#fcfcf8 0%,#f3f2ea 45%,#e5e3d4 100%);"></div>
<div class="t" style="left:134.3px;top:654.5px;letter-spacing:-0.184px;color:#183a9a;">Golds</div>
<div class="abs" style="left:293px;top:653px;width:131px;height:16px;background:#e6f0e6;"></div>
<div class="t" style="left:294.3px;top:654.5px;letter-spacing:0.082px;color:#183a9a;">GRAM</div>
<div class="abs" style="left:425px;top:653px;width:92px;height:16px;background:#e6f0e6;"></div>
<div class="t" style="left:433.79999999999995px;width:80px;text-align:right;top:654.5px;letter-spacing:-0.158px;color:#000000;">494,532</div>
<div class="abs" style="left:518px;top:653px;width:93px;height:16px;background:#e6f0e6;"></div>
<div class="t" style="left:527.8px;width:80px;text-align:right;top:654.5px;letter-spacing:-0.156px;color:#000000;">90,017</div>
<div class="abs" style="left:612px;top:653px;width:107px;height:16px;background:#e6f0e6;"></div>
<div class="t" style="left:635.8px;width:80px;text-align:right;top:654.5px;letter-spacing:-0.153px;color:#000000;">18.20</div>
<div class="abs" style="left:720px;top:653px;width:92px;height:16px;background:#e6f0e6;"></div>
<div class="t" style="left:728.8px;width:80px;text-align:right;top:654.5px;letter-spacing:-0.158px;color:#000000;">524,971</div>
<div class="abs" style="left:813px;top:653px;width:93px;height:16px;background:#e6f0e6;"></div>
<div class="t" style="left:822.8px;width:80px;text-align:right;top:654.5px;letter-spacing:-0.156px;color:#000000;">58,144</div>
<div class="abs" style="left:907px;top:653px;width:107px;height:16px;background:#e6f0e6;"></div>
<div class="t" style="left:930.8px;width:80px;text-align:right;top:654.5px;letter-spacing:-0.153px;color:#000000;">11.08</div>
<div class="abs" style="left:133px;top:670px;width:159px;height:15px;background:linear-gradient(180deg,#fcfcf8 0%,#f3f2ea 45%,#e5e3d4 100%);"></div>
<div class="t" style="left:134.3px;top:671.5px;letter-spacing:-0.162px;color:#183a9a;">Golds:Pretzel Sticks</div>
<div class="abs" style="left:293px;top:670px;width:131px;height:15px;background:linear-gradient(180deg,#fcfcf8 0%,#f3f2ea 45%,#e5e3d4 100%);"></div>
<div class="t" style="left:294.3px;top:671.5px;letter-spacing:0.078px;color:#183a9a;">OUNCE</div>
<div class="abs" style="left:425px;top:670px;width:92px;height:15px;background:#ffffff;"></div>
<div class="t" style="left:433.79999999999995px;width:80px;text-align:right;top:671.5px;letter-spacing:-0.158px;color:#000000;">493,466</div>
<div class="abs" style="left:518px;top:670px;width:93px;height:15px;background:#ffffff;"></div>
<div class="t" style="left:527.8px;width:80px;text-align:right;top:671.5px;letter-spacing:-0.156px;color:#000000;">90,476</div>
<div class="abs" style="left:612px;top:670px;width:107px;height:15px;background:#ffffff;"></div>
<div class="t" style="left:635.8px;width:80px;text-align:right;top:671.5px;letter-spacing:-0.153px;color:#000000;">18.33</div>
<div class="abs" style="left:720px;top:670px;width:92px;height:15px;background:#ffffff;"></div>
<div class="t" style="left:728.8px;width:80px;text-align:right;top:671.5px;letter-spacing:-0.158px;color:#000000;">527,492</div>
<div class="abs" style="left:813px;top:670px;width:93px;height:15px;background:#ffffff;"></div>
<div class="t" style="left:822.8px;width:80px;text-align:right;top:671.5px;letter-spacing:-0.156px;color:#000000;">59,473</div>
<div class="abs" style="left:907px;top:670px;width:107px;height:15px;background:#ffffff;"></div>
<div class="t" style="left:930.8px;width:80px;text-align:right;top:671.5px;letter-spacing:-0.153px;color:#000000;">11.27</div>
<div class="abs" style="left:133px;top:686px;width:159px;height:15px;background:linear-gradient(180deg,#fcfcf8 0%,#f3f2ea 45%,#e5e3d4 100%);"></div>
<div class="t" style="left:134.3px;top:687.5px;letter-spacing:-0.090px;color:#183a9a;">Pretzel Sticks:8oz</div>
<div class="abs" style="left:293px;top:686px;width:131px;height:15px;background:#e6f0e6;"></div>
<div class="t" style="left:294.3px;top:687.5px;letter-spacing:0.078px;color:#183a9a;">OUNCE</div>
<div class="abs" style="left:425px;top:686px;width:92px;height:15px;background:#e6f0e6;"></div>
<div class="t" style="left:433.79999999999995px;width:80px;text-align:right;top:687.5px;letter-spacing:-0.158px;color:#000000;">493,922</div>
<div class="abs" style="left:518px;top:686px;width:93px;height:15px;background:#e6f0e6;"></div>
<div class="t" style="left:527.8px;width:80px;text-align:right;top:687.5px;letter-spacing:-0.156px;color:#000000;">90,655</div>
<div class="abs" style="left:612px;top:686px;width:107px;height:15px;background:#e6f0e6;"></div>
<div class="t" style="left:635.8px;width:80px;text-align:right;top:687.5px;letter-spacing:-0.153px;color:#000000;">18.35</div>
<div class="abs" style="left:720px;top:686px;width:92px;height:15px;background:#e6f0e6;"></div>
<div class="t" style="left:728.8px;width:80px;text-align:right;top:687.5px;letter-spacing:-0.158px;color:#000000;">525,959</div>
<div class="abs" style="left:813px;top:686px;width:93px;height:15px;background:#e6f0e6;"></div>
<div class="t" style="left:822.8px;width:80px;text-align:right;top:687.5px;letter-spacing:-0.156px;color:#000000;">61,588</div>
<div class="abs" style="left:907px;top:686px;width:107px;height:15px;background:#e6f0e6;"></div>
<div class="t" style="left:930.8px;width:80px;text-align:right;top:687.5px;letter-spacing:-0.153px;color:#000000;">11.71</div>
</body>
</html>
